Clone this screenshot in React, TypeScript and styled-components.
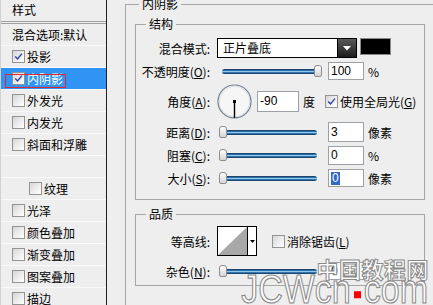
import React from "react";
import styled, { createGlobalStyle } from "styled-components";

const GlobalStyle = createGlobalStyle`
  html, body { margin: 0; padding: 0; }
  body {
    background: #eeeeee;
    font-family: "Noto Sans CJK SC", "Liberation Sans", sans-serif;
    font-size: 12px;
    color: #000;
  }
  #root { width: 433px; height: 305px; overflow: hidden; }
`;

const Dialog = styled.div`
  position: relative;
  display: flex;
  width: 433px;
  height: 305px;
  overflow: hidden;
  background: #eeeeee;
`;

/* ---------- left style list ---------- */
const StyleList = styled.div`
  flex: none;
  width: 105px;
  border-left: 1px solid #d2d2d2;
  border-right: 1px solid #202020;
  display: flex;
  flex-direction: column;
`;

const ListHeader = styled.div`
  flex: none;
  height: 21px;
  line-height: 20px;
  padding-left: 11px;
  border-bottom: 3px double #a0a0a0;
`;

const StyleRow = styled.div<{ $selected?: boolean; $indent?: boolean }>`
  position: relative;
  flex: none;
  height: 21px;
  line-height: 21px;
  border-bottom: 1px solid #fafafa;
  display: flex;
  align-items: center;
  gap: 2px;
  padding-left: ${(p) => (p.$indent ? 28 : 11)}px;
  background: ${(p) => (p.$selected ? "#3094f5" : "transparent")};
  color: ${(p) => (p.$selected ? "#fff" : "#000")};
  white-space: nowrap;
  &:first-of-type { height: 20px; }
`;

const Annotation = styled.span`
  position: absolute;
  left: 4px;
  top: 6px;
  width: 61px;
  height: 14px;
  box-sizing: border-box;
  border: 1px solid #e3262b;
`;

const CheckBox = styled.span`
  flex: none;
  width: 13px;
  height: 13px;
  box-sizing: border-box;
  border: 1px solid #939393;
  background: linear-gradient(135deg, #d6d6d6 0%, #f0f0f0 60%, #ffffff 100%);
  display: inline-flex;
  align-items: center;
  justify-content: center;
`;

const Check = () => (
  <svg width="9" height="9" viewBox="0 0 9 9">
    <path d="M1.2 4.4 L3.6 6.9 L7.9 1.6" fill="none" stroke="#3346a8" strokeWidth="1.5" />
  </svg>
);

const Tick: React.FC<{ checked?: boolean }> = ({ checked }) => (
  <CheckBox>{checked ? <Check /> : null}</CheckBox>
);

/* ---------- right panel ---------- */
const Main = styled.div`
  flex: 1;
  min-width: 0;
  padding-left: 18px;
`;

const OuterGroup = styled.fieldset`
  margin: -3px -60px 0 0;
  padding: 6px 0 0 9px;
  border: 1px solid #a6a6a6;
  border-right: none;
  border-bottom: none;
  min-width: 0;
  min-height: 330px;
`;

const GroupTitle = styled.legend<{ $offset: number }>`
  padding: 0 3px;
  margin-left: ${(p) => p.$offset}px;
  line-height: 14px;
  font-size: 12px;
`;

const Group = styled.fieldset<{ $pt: number; $pb: number; $mt: number }>`
  box-sizing: border-box;
  width: 290px;
  min-width: 0;
  margin: ${(p) => p.$mt}px 0 0 0;
  padding: ${(p) => p.$pt}px 0 ${(p) => p.$pb}px 0;
  border: 1px solid #a6a6a6;
`;

const Field = styled.div<{ $h: number; $gap?: number }>`
  display: flex;
  align-items: center;
  height: ${(p) => p.$h}px;
  margin-top: ${(p) => p.$gap ?? 0}px;
  white-space: nowrap;
`;

const Label = styled.span`
  flex: none;
  width: 74px;
  margin-right: 7px;
  text-align: right;
  white-space: nowrap;
`;

const Select = styled.div`
  flex: none;
  display: flex;
  width: 140px;
  height: 20px;
  box-sizing: border-box;
  border: 1px solid #000;
  background: #fff;
`;

const SelectText = styled.span`
  flex: 1;
  padding-left: 5px;
  line-height: 18px;
`;

const SelectArrow = styled.span`
  flex: none;
  width: 18px;
  border-left: 1px solid #000;
  background: linear-gradient(#5a5a5a, #1c1c1c);
  display: flex;
  align-items: center;
  justify-content: center;
`;

const Swatch = styled.span`
  flex: none;
  width: 31px;
  height: 17px;
  box-sizing: border-box;
  margin-left: 3px;
  align-self: flex-start;
  background: #000;
  border: 1px solid #8a8a8a;
`;

const Slider = styled.div`
  position: relative;
  flex: none;
  width: 104px;
  height: 14px;
  margin-left: 2px;
  display: flex;
  align-items: center;
`;

const Track = styled.span`
  flex: none;
  margin-left: 3px;
  width: 95px;
  height: 5px;
  border-radius: 3px;
  background: linear-gradient(#10324f 0%, #2c6ea8 30%, #8fc6ee 50%, #2c6ea8 72%, #10324f 100%);
`;

const Thumb = styled.span`
  position: absolute;
  top: 1px;
  width: 8px;
  height: 12px;
  box-sizing: border-box;
  border: 1px solid #8d8d8d;
  border-radius: 3px 3px 2px 2px;
  background: linear-gradient(#ffffff, #d4d4d4);
`;

const RangeSlider: React.FC<{ value: number }> = ({ value }) => (
  <Slider>
    <Track />
    <Thumb style={{ left: `${(value / 100) * 95}px` }} />
  </Slider>
);

const NumField = styled.div<{ $w?: number; $h?: number }>`
  flex: none;
  width: ${(p) => p.$w ?? 36}px;
  height: ${(p) => p.$h ?? 19}px;
  box-sizing: border-box;
  margin-left: 5px;
  padding-left: 2px;
  border: 1px solid #9ba1a7;
  background: #fff;
  font-family: "Liberation Sans", Arial, sans-serif;
  font-size: 12px;
  line-height: ${(p) => (p.$h ?? 19) - 2}px;
  display: flex;
  align-items: center;
`;

const Selection = styled.span`
  background: #316ac5;
  color: #fff;
  padding: 0 1px;
  line-height: 13px;
`;

const Unit = styled.span`
  flex: none;
  margin-left: 4px;
`;

const GapText = styled.span<{ $ml: number }>`
  flex: none;
  margin-left: ${(p) => p.$ml}px;
  display: inline-flex;
  align-items: center;
  gap: 2px;
`;

const AngleDial = () => (
  <svg width="35" height="35" viewBox="0 0 35 35" style={{ flex: "none" }}>
    <circle cx="17.5" cy="17.5" r="16.5" fill="#f6f6f6" stroke="#6f7f90" strokeWidth="1.2" />
    <circle cx="17.5" cy="17.5" r="15.3" fill="none" stroke="#d9dde2" strokeWidth="1" />
    <line x1="17.5" y1="17.5" x2="17.5" y2="34" stroke="#000" strokeWidth="1.4" />
    <rect x="16" y="16" width="3" height="3" fill="#000" />
  </svg>
);

const Contour = styled.div`
  flex: none;
  display: flex;
  width: 40px;
  height: 30px;
  box-sizing: border-box;
  border: 1px solid #000;
  background: #fff;
`;

const ContourArrow = styled.span`
  flex: 1;
  border-left: 1px solid #000;
  display: flex;
  align-items: center;
  justify-content: center;
`;

/* ---------- watermark ---------- */
const Watermark = styled.div`
  position: absolute;
  right: 5px;
  bottom: -1px;
  display: flex;
  flex-direction: column;
  align-items: flex-end;
  pointer-events: none;
  color: #ffffff;
  -webkit-text-stroke: 1px #8a8a8a;
`;

const WmCn = styled.div`
  font-family: "Noto Sans CJK SC", sans-serif;
  font-size: 22px;
  font-weight: 700;
  line-height: 24px;
  letter-spacing: 0.5px;
  margin-bottom: -4px;
  margin-right: -1px;
`;

const WmEn = styled.div`
  font-family: "Liberation Sans", Arial, sans-serif;
  font-size: 34px;
  line-height: 30px;
  white-space: nowrap;
  transform: scaleY(1.18);
  transform-origin: 50% 90%;
`;

const RedDot = styled.span`
  display: inline-block;
  width: 7px;
  height: 6px;
  margin: 0 3px;
  vertical-align: 4px;
  background: #ff0000;
  -webkit-text-stroke: 0;
`;

const styleItems: {
  label: string;
  box?: boolean;
  checked?: boolean;
  selected?: boolean;
  indent?: boolean;
}[] = [
  { label: "混合选项:默认" },
  { label: "投影", box: true, checked: true },
  { label: "内阴影", box: true, checked: true, selected: true },
  { label: "外发光", box: true },
  { label: "内发光", box: true },
  { label: "斜面和浮雕", box: true },
  { label: "" },
  { label: "纹理", box: true, indent: true },
  { label: "光泽", box: true },
  { label: "颜色叠加", box: true },
  { label: "渐变叠加", box: true },
  { label: "图案叠加", box: true },
  { label: "描边", box: true },
];

export default function App() {
  return (
    <>
      <GlobalStyle />
      <Dialog>
        <StyleList>
          <ListHeader>样式</ListHeader>
          {styleItems.map((it, i) => (
            <StyleRow key={i} $selected={it.selected} $indent={it.indent}>
              {it.box ? <Tick checked={it.checked} /> : null}
              <span>{it.label}</span>
              {it.selected ? <Annotation /> : null}
            </StyleRow>
          ))}
        </StyleList>

        <Main>
          <OuterGroup>
            <GroupTitle $offset={4}>内阴影</GroupTitle>

            <Group $pt={7} $pb={10} $mt={0}>
              <GroupTitle $offset={10}>结构</GroupTitle>
              <Field $h={20}>
                <Label>混合模式:</Label>
                <Select>
                  <SelectText>正片叠底</SelectText>
                  <SelectArrow>
                    <svg width="8" height="5" viewBox="0 0 8 5">
                      <polygon points="0,0 8,0 4,4.5" fill="#fff" />
                    </svg>
                  </SelectArrow>
                </Select>
                <Swatch />
              </Field>
              <Field $h={22} $gap={2}>
                <Label>
                  不透明度(<u>O</u>):
                </Label>
                <RangeSlider value={100} />
                <NumField $h={18}>100</NumField>
                <Unit>%</Unit>
              </Field>
              <Field $h={35} $gap={2}>
                <Label>
                  角度(<u>A</u>):
                </Label>
                <AngleDial />
                <NumField $w={42} $h={21}>-90</NumField>
                <Unit>度</Unit>
                <GapText $ml={10}>
                  <Tick checked />
                  <span>
                    使用全局光(<u>G</u>)
                  </span>
                </GapText>
              </Field>
              <Field $h={22} $gap={2}>
                <Label>
                  距离(<u>D</u>):
                </Label>
                <RangeSlider value={0} />
                <NumField $h={20}>3</NumField>
                <Unit>像素</Unit>
              </Field>
              <Field $h={24}>
                <Label>
                  阻塞(<u>C</u>):
                </Label>
                <RangeSlider value={0} />
                <NumField>0</NumField>
                <Unit>%</Unit>
              </Field>
              <Field $h={22}>
                <Label>
                  大小(<u>S</u>):
                </Label>
                <RangeSlider value={0} />
                <NumField $h={18}>
                  <Selection>0</Selection>
                </NumField>
                <Unit>像素</Unit>
              </Field>
            </Group>

            <Group $pt={5} $pb={4} $mt={7}>
              <GroupTitle $offset={10}>品质</GroupTitle>
              <Field $h={30}>
                <Label>等高线:</Label>
                <Contour>
                  <svg width="29" height="28" viewBox="0 0 29 28" style={{ flex: "none" }}>
                    <rect width="29" height="28" fill="#fff" />
                    <polygon points="0,28 29,0 29,28" fill="#a8a8a8" />
                  </svg>
                  <ContourArrow>
                    <svg width="5" height="3" viewBox="0 0 5 3">
                      <polygon points="0,0 5,0 2.5,3" fill="#000" />
                    </svg>
                  </ContourArrow>
                </Contour>
                <GapText $ml={15}>
                  <Tick />
                  <span>
                    消除锯齿(<u>L</u>)
                  </span>
                </GapText>
              </Field>
              <Field $h={20} $gap={5}>
                <Label>
                  杂色(<u>N</u>):
                </Label>
                <RangeSlider value={0} />
                <NumField $h={18}>0</NumField>
              </Field>
            </Group>
          </OuterGroup>
        </Main>

        <Watermark>
          <WmCn>中国教程网</WmCn>
          <WmEn>
            JCWcn<RedDot />com
          </WmEn>
        </Watermark>
      </Dialog>
    </>
  );
}
